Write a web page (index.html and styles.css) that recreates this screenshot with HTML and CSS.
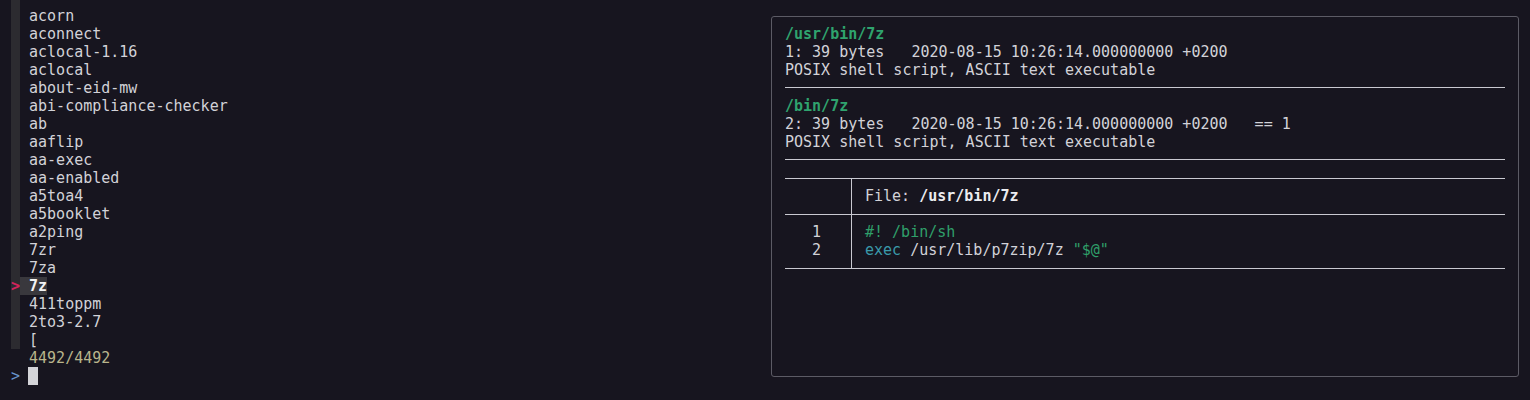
FILE: index.html
```html
<!DOCTYPE html>
<html>
<head>
<meta charset="utf-8">
<link rel="stylesheet" href="styles.css">
</head>
<body>
<div class="term">
  <div class="list">
    <div class="row lead"><span class="g"></span></div>
    <div class="row"><span class="g"></span><span class="t"> acorn</span></div>
    <div class="row"><span class="g"></span><span class="t"> aconnect</span></div>
    <div class="row"><span class="g"></span><span class="t"> aclocal-1.16</span></div>
    <div class="row"><span class="g"></span><span class="t"> aclocal</span></div>
    <div class="row"><span class="g"></span><span class="t"> about-eid-mw</span></div>
    <div class="row"><span class="g"></span><span class="t"> abi-compliance-checker</span></div>
    <div class="row"><span class="g"></span><span class="t"> ab</span></div>
    <div class="row"><span class="g"></span><span class="t"> aaflip</span></div>
    <div class="row"><span class="g"></span><span class="t"> aa-exec</span></div>
    <div class="row"><span class="g"></span><span class="t"> aa-enabled</span></div>
    <div class="row"><span class="g"></span><span class="t"> a5toa4</span></div>
    <div class="row"><span class="g"></span><span class="t"> a5booklet</span></div>
    <div class="row"><span class="g"></span><span class="t"> a2ping</span></div>
    <div class="row"><span class="g"></span><span class="t"> 7zr</span></div>
    <div class="row"><span class="g"></span><span class="t"> 7za</span></div>
    <div class="row"><span class="g ptr">&gt;</span><span class="t sel"> 7z</span></div>
    <div class="row"><span class="g"></span><span class="t"> 411toppm</span></div>
    <div class="row"><span class="g"></span><span class="t"> 2to3-2.7</span></div>
    <div class="row"><span class="g"></span><span class="t"> [</span></div>
    <div class="row"><span class="blank"></span><span class="t count"> 4492/4492</span></div>
    <div class="row"><span class="prompt">&gt;</span><span class="t"> </span><span class="cursor"></span></div>
  </div>
  <div class="preview">
    <div class="line path">/usr/bin/7z</div>
    <div class="line">1: 39 bytes   2020-08-15 10:26:14.000000000 +0200</div>
    <div class="line">POSIX shell script, ASCII text executable</div>
    <div class="hr"></div>
    <div class="line path">/bin/7z</div>
    <div class="line">2: 39 bytes   2020-08-15 10:26:14.000000000 +0200   == 1</div>
    <div class="line">POSIX shell script, ASCII text executable</div>
    <div class="hr"></div>
    <div class="tbl">
      <div class="cell num head"></div>
      <div class="cell code head">File: <b>/usr/bin/7z</b></div>
      <div class="cell num">   1
   2</div>
      <div class="cell code"><span class="grn">#! /bin/sh</span>
<span class="cyn">exec</span> /usr/lib/p7zip/7z <span class="grn">"$@"</span></div>
    </div>
  </div>
</div>
</body>
</html>
```
FILE: styles.css
```css
html, body {
  margin: 0;
  padding: 0;
  background: #17151f;
}
body {
  width: 1530px;
  height: 400px;
  overflow: hidden;
  font-family: "DejaVu Sans Mono", "Liberation Mono", monospace;
  font-size: 15px;
  line-height: 18px;
  color: #d2d2d8;
}
.term {
  display: flex;
  align-items: flex-start;
}
.list {
  width: 771px;
  flex: none;
}
.row {
  display: flex;
  height: 18px;
  padding-left: 11px;
  white-space: pre;
}
.row.lead {
  height: 7px;
}
.g {
  width: 9px;
  flex: none;
  background: #2c2b30;
}
.blank, .prompt {
  width: 9px;
  flex: none;
}
.ptr {
  color: #d4245c;
  font-weight: bold;
}
.prompt {
  color: #6894cc;
}
.t.sel {
  background: #39383d;
  color: #f2f2f4;
  font-weight: bold;
}
.count {
  color: #b9b58c;
}
.cursor {
  width: 10px;
  height: 18px;
  background: #d4d4d8;
  margin-left: -1px;
}
.preview {
  flex: none;
  width: 748px;
  height: 361px;
  margin-top: 16px;
  box-sizing: border-box;
  border: 1px solid #5c5b65;
  border-radius: 3px;
  padding: 8px 0 0 13px;
}
.line {
  height: 18px;
  white-space: pre;
}
.path {
  color: #2fa36e;
  font-weight: bold;
}
.hr {
  width: 720px;
  height: 18px;
  box-sizing: border-box;
  padding-top: 8px;
}
.hr::before {
  content: "";
  display: block;
  height: 1px;
  background: #c9c9d1;
}
.tbl {
  width: 720px;
  margin-top: 9px;
  display: grid;
  grid-template-columns: 67px 1fr;
  border-top: 1px solid #c9c9d1;
  border-bottom: 1px solid #c9c9d1;
}
.cell {
  padding-top: 8px;
  padding-bottom: 9px;
  white-space: pre;
}
.cell.head {
  border-bottom: 1px solid #c9c9d1;
}
.num {
  border-right: 1px solid #c9c9d1;
}
.code {
  padding-left: 13px;
}
.code b {
  color: #ececf0;
}
.grn {
  color: #2f9f6a;
}
.cyn {
  color: #3a9aaa;
}
```
